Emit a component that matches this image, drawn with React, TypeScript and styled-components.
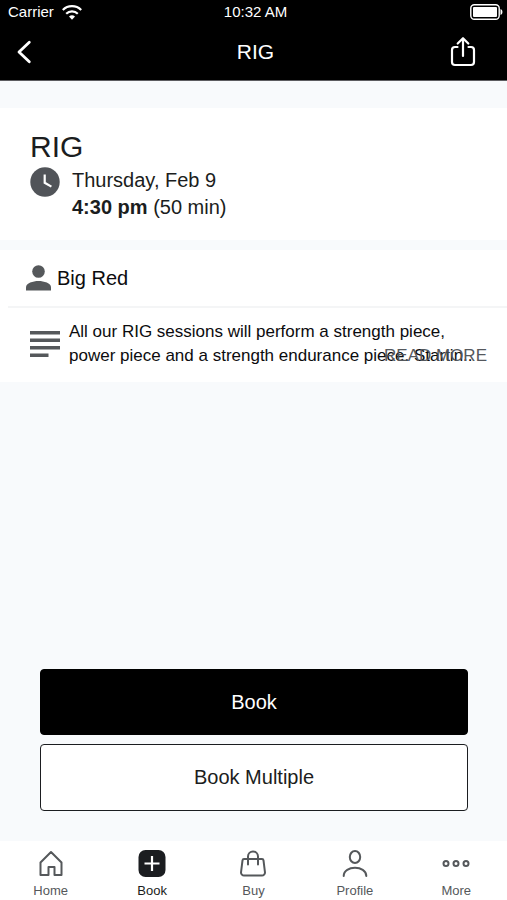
import React from "react";
import styled, { createGlobalStyle } from "styled-components";

const GlobalStyle = createGlobalStyle`
  * { box-sizing: border-box; }
  body {
    margin: 0;
    background: #f8fafc;
    color: #1b1d20;
    font-family: "Liberation Sans", Arial, Helvetica, sans-serif;
  }
  h1, h2, p { margin: 0; font-weight: 400; }
  button { font: inherit; cursor: pointer; }
  svg { display: block; flex: none; }
`;

const Screen = styled.div`
  display: flex;
  flex-direction: column;
  min-height: 100vh;
`;

const Header = styled.header`
  background: #000;
  color: #fff;
  border-bottom: 1px solid #5c5c60;
`;

const StatusBar = styled.div`
  display: grid;
  grid-template-columns: 1fr auto 1fr;
  align-items: center;
  height: 24px;
  padding: 0 4px 0 8px;
  font-size: 15px;
  line-height: 24px;
`;

const Carrier = styled.div`
  display: flex;
  align-items: center;
  gap: 8px;
`;

const BatterySlot = styled.div`
  justify-self: end;
`;

const NavBar = styled.div`
  display: grid;
  grid-template-columns: 56px 1fr 48px;
  align-items: center;
  height: 56px;
  padding: 0 20px 0 16px;
`;

const NavTitle = styled.h1`
  text-align: center;
  font-size: 21px;
  line-height: 24px;
`;

const IconButton = styled.button<{ $end?: boolean }>`
  display: flex;
  align-items: center;
  justify-content: ${(p) => (p.$end ? "center" : "flex-start")};
  height: 48px;
  padding: 0;
  border: 0;
  background: none;
  color: inherit;
`;

const Content = styled.main`
  flex: 1;
  display: flex;
  flex-direction: column;
  padding-top: 27px;
`;

const Summary = styled.section`
  background: #fff;
  padding: 22px 30px 19px;
`;

const Title = styled.h2`
  font-size: 30px;
  line-height: 34px;
`;

const When = styled.div`
  display: flex;
  gap: 12px;
  padding-top: 3px;
`;

const WhenText = styled.p`
  font-size: 20px;
  line-height: 27px;
`;

const Details = styled.section`
  margin-top: 10px;
  background: #fff;
  color: #0c0c0e;
`;

const Instructor = styled.div`
  display: flex;
  align-items: center;
  gap: 6px;
  height: 58px;
  margin-left: 8px;
  padding-left: 18px;
  border-bottom: 2px solid #f4f5f6;
  font-size: 20px;
`;

const Description = styled.div`
  position: relative;
  display: flex;
  align-items: center;
  gap: 9px;
  padding: 12px 20px 14px 30px;
`;

const DescriptionText = styled.p`
  font-size: 17px;
  line-height: 24px;
`;

const ReadMore = styled.button`
  position: absolute;
  right: 20px;
  bottom: 14px;
  padding: 0;
  border: 0;
  background: none;
  color: #55585d;
  font-size: 17px;
  line-height: 24px;
`;

const Actions = styled.div`
  display: flex;
  flex-direction: column;
  gap: 9px;
  margin-top: auto;
  padding: 30px 39px 30px 40px;
`;

const ActionButton = styled.button<{ $primary?: boolean }>`
  height: ${(p) => (p.$primary ? "66px" : "67px")};
  border: 1px solid ${(p) => (p.$primary ? "#000" : "#1b1d20")};
  border-radius: 4px;
  background: ${(p) => (p.$primary ? "#000" : "#fff")};
  color: ${(p) => (p.$primary ? "#fff" : "#1b1d20")};
  font-size: 20px;
`;

const TabBar = styled.nav`
  display: grid;
  grid-template-columns: repeat(5, 1fr);
  height: 59px;
  background: #fff;
`;

const Tab = styled.a<{ $active?: boolean }>`
  display: flex;
  flex-direction: column;
  align-items: center;
  gap: 6px;
  padding-top: 8px;
  color: ${(p) => (p.$active ? "#1b1d20" : "#55585b")};
  font-size: 13px;
  line-height: 16px;
  text-decoration: none;
`;

const strokeProps = {
  fill: "none",
  stroke: "currentColor",
  strokeWidth: 2,
  strokeLinecap: "round",
  strokeLinejoin: "round",
} as const;

const WifiIcon = () => (
  <svg width="20" height="16" viewBox="0 0 20 16" fill="none" stroke="#fff" strokeWidth="2.2" aria-hidden="true">
    <path d="M.8 6A13 13 0 0 1 19.2 6" />
    <path d="M4.2 9.8a8.2 8.2 0 0 1 11.6 0" />
    <path d="M7 12.6a4.3 4.3 0 0 1 6 0L10 15.7z" fill="#fff" stroke="none" />
  </svg>
);

const BatteryIcon = () => (
  <svg width="33" height="16" viewBox="0 0 33 16" role="img" aria-label="Battery full">
    <rect x="0.8" y="0.8" width="28.4" height="14.4" rx="3.5" fill="none" stroke="#fff" strokeWidth="1.4" />
    <rect x="3" y="3" width="24" height="10" rx="1" fill="#fff" />
    <path d="M30.5 5q2 .7 2 3t-2 3z" fill="#fff" />
  </svg>
);

const BackIcon = () => (
  <svg width="16" height="24" viewBox="0 0 16 24" {...strokeProps} strokeWidth={2.8} aria-hidden="true">
    <path d="M13.3 2.2 3 12l10.3 9.8" />
  </svg>
);

const ShareIcon = () => (
  <svg width="26" height="32" viewBox="0 0 26 32" {...strokeProps} strokeWidth={2.2} aria-hidden="true">
    <path d="M7.5 11H5a3 3 0 0 0-3 3v12a3 3 0 0 0 3 3h16a3 3 0 0 0 3-3V14a3 3 0 0 0-3-3h-2.5M13 20V2.5M7.7 7.5 13 2.2l5.3 5.3" />
  </svg>
);

const ClockIcon = () => (
  <svg width="30" height="30" viewBox="0 0 30 30" aria-hidden="true">
    <circle cx="15" cy="15" r="14.7" fill="#515459" />
    <path d="M14.7 7.5v8.3l6.7 3.8" fill="none" stroke="#fff" strokeWidth="2.2" />
  </svg>
);

const PersonIcon = () => (
  <svg width="25" height="26" viewBox="0 0 25 26" fill="#55585b" aria-hidden="true">
    <circle cx="12.5" cy="6.5" r="6.3" />
    <path d="M0 25.5v-3.3C0 18 7 15.9 12.5 15.9S25 18 25 22.2v3.3z" />
  </svg>
);

const NotesIcon = () => (
  <svg width="30" height="28" viewBox="0 0 30 28" fill="#55585b" aria-hidden="true">
    <path d="M0 1h30v3.5H0zM0 8.5h30V12H0zM0 16h30v3.5H0zM0 23.5h18.5V27H0z" />
  </svg>
);

const HomeIcon = () => (
  <svg width="28" height="28" viewBox="0 0 28 28" {...strokeProps} aria-hidden="true">
    <path d="M3.5 13.5 14 3l10.500 10.500V26h-7v-8h-6v8h-8z" />
  </svg>
);

const BookIcon = () => (
  <svg width="28" height="28" viewBox="0 0 28 28" aria-hidden="true">
    <rect x="0.5" y="1" width="27" height="27" rx="7" fill="#1b1d20" />
    <path d="M14 7v15M6.5 14.5h15" stroke="#fff" strokeWidth="2.2" />
  </svg>
);

const BagIcon = () => (
  <svg width="28" height="28" viewBox="0 0 28 28" {...strokeProps} aria-hidden="true">
    <path d="M5 10h18a1.500 1.500 0 0 1 1.500 1.300l1.500 12.200a3 3 0 0 1-3 3H5a3 3 0 0 1-3-3l1.500-12.200A1.500 1.500 0 0 1 5 10zM9 15.500V7.500a5 5 0 0 1 10 0v8" />
  </svg>
);

const ProfileIcon = () => (
  <svg width="28" height="28" viewBox="0 0 28 28" {...strokeProps} aria-hidden="true">
    <ellipse cx="14" cy="8" rx="5.2" ry="6" />
    <path d="M2.7 27c0-11 22.600-11 22.600 0" />
  </svg>
);

const MoreIcon = () => (
  <svg width="28" height="28" viewBox="0 0 28 28" {...strokeProps} aria-hidden="true">
    <circle cx="4" cy="14.5" r="2.5" />
    <circle cx="14" cy="14.5" r="2.5" />
    <circle cx="24" cy="14.5" r="2.5" />
  </svg>
);

const tabs = [
  { label: "Home", Icon: HomeIcon },
  { label: "Book", Icon: BookIcon },
  { label: "Buy", Icon: BagIcon },
  { label: "Profile", Icon: ProfileIcon },
  { label: "More", Icon: MoreIcon },
];

export default function App() {
  return (
    <>
      <GlobalStyle />
      <Screen>
        <Header>
          <StatusBar>
            <Carrier>
              Carrier
              <WifiIcon />
            </Carrier>
            <span>10:32 AM</span>
            <BatterySlot>
              <BatteryIcon />
            </BatterySlot>
          </StatusBar>
          <NavBar>
            <IconButton type="button" aria-label="Back">
              <BackIcon />
            </IconButton>
            <NavTitle>RIG</NavTitle>
            <IconButton type="button" aria-label="Share" $end>
              <ShareIcon />
            </IconButton>
          </NavBar>
        </Header>
        <Content>
          <Summary>
            <Title>RIG</Title>
            <When>
              <ClockIcon />
              <WhenText>
                Thursday, Feb 9
                <br />
                <strong>4:30 pm</strong> (50 min)
              </WhenText>
            </When>
          </Summary>
          <Details>
            <Instructor>
              <PersonIcon />
              <span>Big Red</span>
            </Instructor>
            <Description>
              <NotesIcon />
              <DescriptionText>
                All our RIG sessions will perform a strength piece, power piece and a strength endurance piece. Startin..
              </DescriptionText>
              <ReadMore type="button">READ MORE</ReadMore>
            </Description>
          </Details>
          <Actions>
            <ActionButton type="button" $primary>
              Book
            </ActionButton>
            <ActionButton type="button">Book Multiple</ActionButton>
          </Actions>
        </Content>
        <TabBar aria-label="Main">
          {tabs.map(({ label, Icon }) => (
            <Tab key={label} href="#" $active={label === "Book"} aria-current={label === "Book" ? "page" : undefined}>
              <Icon />
              {label}
            </Tab>
          ))}
        </TabBar>
      </Screen>
    </>
  );
}
